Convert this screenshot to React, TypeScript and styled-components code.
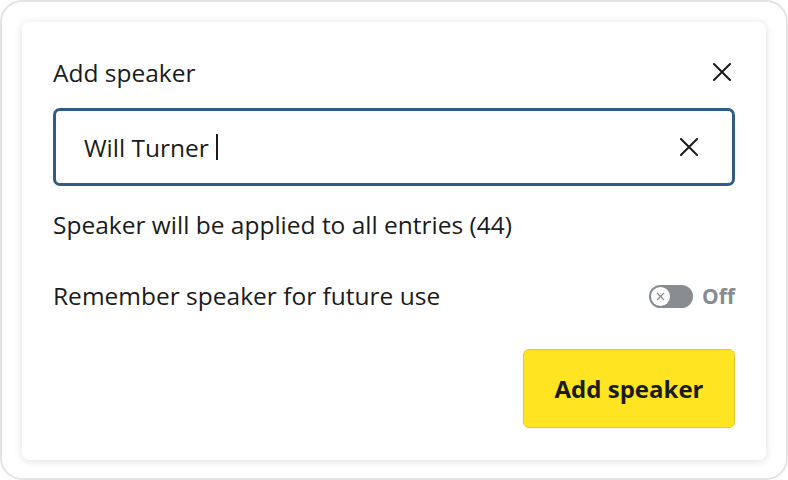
import React from 'react';
import styled, { createGlobalStyle } from 'styled-components';

const GlobalStyle = createGlobalStyle`
  html, body {
    margin: 0;
    padding: 0;
    background: #fff;
    font-family: 'Open Sans', 'Noto Sans', sans-serif;
    color: #1b1b1b;
  }
`;

const Frame = styled.div`
  box-sizing: border-box;
  width: 788px;
  height: 480px;
  border: 2px solid #e3e3e3;
  border-radius: 22px;
  padding: 20px;
`;

const Card = styled.div`
  box-sizing: border-box;
  height: 438px;
  background: #fff;
  border-radius: 7px;
  box-shadow: 0 1px 8px rgba(0, 0, 0, 0.13);
  padding: 32px 31px 32px 31px;
  display: flex;
  flex-direction: column;
`;

const Header = styled.div`
  display: flex;
  justify-content: space-between;
  align-items: center;
  height: 36px;
`;

const Title = styled.h2`
  margin: 0;
  font-size: 24.5px;
  font-weight: 400;
`;

const IconButton = styled.button`
  border: none;
  background: none;
  padding: 0;
  width: 26px;
  height: 26px;
  display: flex;
  align-items: center;
  justify-content: center;
  color: #1b1b1b;
  cursor: pointer;
`;

const InputBox = styled.div`
  box-sizing: border-box;
  margin-top: 18px;
  height: 78px;
  border: 3px solid #2f5d87;
  border-radius: 7px;
  display: flex;
  align-items: center;
  padding: 0 30px 0 28px;
`;

const InputText = styled.div`
  flex: 1;
  display: flex;
  align-items: center;
  font-size: 24.5px;
`;

const Caret = styled.span`
  display: inline-block;
  width: 2px;
  height: 26px;
  margin-left: 7px;
  background: #1b1b1b;
`;

const Note = styled.p`
  margin: 22px 0 0;
  font-size: 24.5px;
  line-height: 34px;
`;

const Row = styled.div`
  margin-top: 37px;
  display: flex;
  justify-content: space-between;
  align-items: center;
  font-size: 24.5px;
  line-height: 34px;
`;

const Toggle = styled.div`
  display: flex;
  align-items: center;
  gap: 9px;
  color: #858b8e;
  font-size: 21px;
  font-weight: 700;
`;

const Track = styled.div`
  position: relative;
  width: 44px;
  height: 23px;
  border-radius: 12px;
  background: #878d90;
`;

const Knob = styled.div`
  position: absolute;
  left: 2px;
  top: 2px;
  width: 19px;
  height: 19px;
  border-radius: 50%;
  background: #fff;
  display: flex;
  align-items: center;
  justify-content: center;
`;

const Footer = styled.div`
  margin-top: auto;
  display: flex;
  justify-content: flex-end;
`;

const PrimaryButton = styled.button`
  box-sizing: border-box;
  width: 212px;
  height: 79px;
  background: #ffe422;
  border: 1px solid #eec52a;
  border-radius: 6px;
  font-family: inherit;
  font-size: 24px;
  font-weight: 700;
  color: #1b1b1b;
  cursor: pointer;
`;

const Cross = ({ size = 18, stroke = 2 }: { size?: number; stroke?: number }) => (
  <svg width={size} height={size} viewBox="0 0 18 18" fill="none">
    <path d="M1 1L17 17M17 1L1 17" stroke="currentColor" strokeWidth={stroke} strokeLinecap="square" />
  </svg>
);

const App: React.FC = () => {
  return (
    <>
      <GlobalStyle />
      <Frame>
        <Card>
          <Header>
            <Title>Add speaker</Title>
            <IconButton aria-label="Close">
              <Cross />
            </IconButton>
          </Header>
          <InputBox>
            <InputText>
              Will Turner
              <Caret />
            </InputText>
            <IconButton aria-label="Clear">
              <Cross />
            </IconButton>
          </InputBox>
          <Note>Speaker will be applied to all entries (44)</Note>
          <Row>
            <span>Remember speaker for future use</span>
            <Toggle>
              <Track>
                <Knob>
                  <svg width="9" height="9" viewBox="0 0 9 9" fill="none">
                    <path d="M1 1L8 8M8 1L1 8" stroke="#878d90" strokeWidth="1.2" />
                  </svg>
                </Knob>
              </Track>
              Off
            </Toggle>
          </Row>
          <Footer>
            <PrimaryButton>Add speaker</PrimaryButton>
          </Footer>
        </Card>
      </Frame>
    </>
  );
};

export default App;
